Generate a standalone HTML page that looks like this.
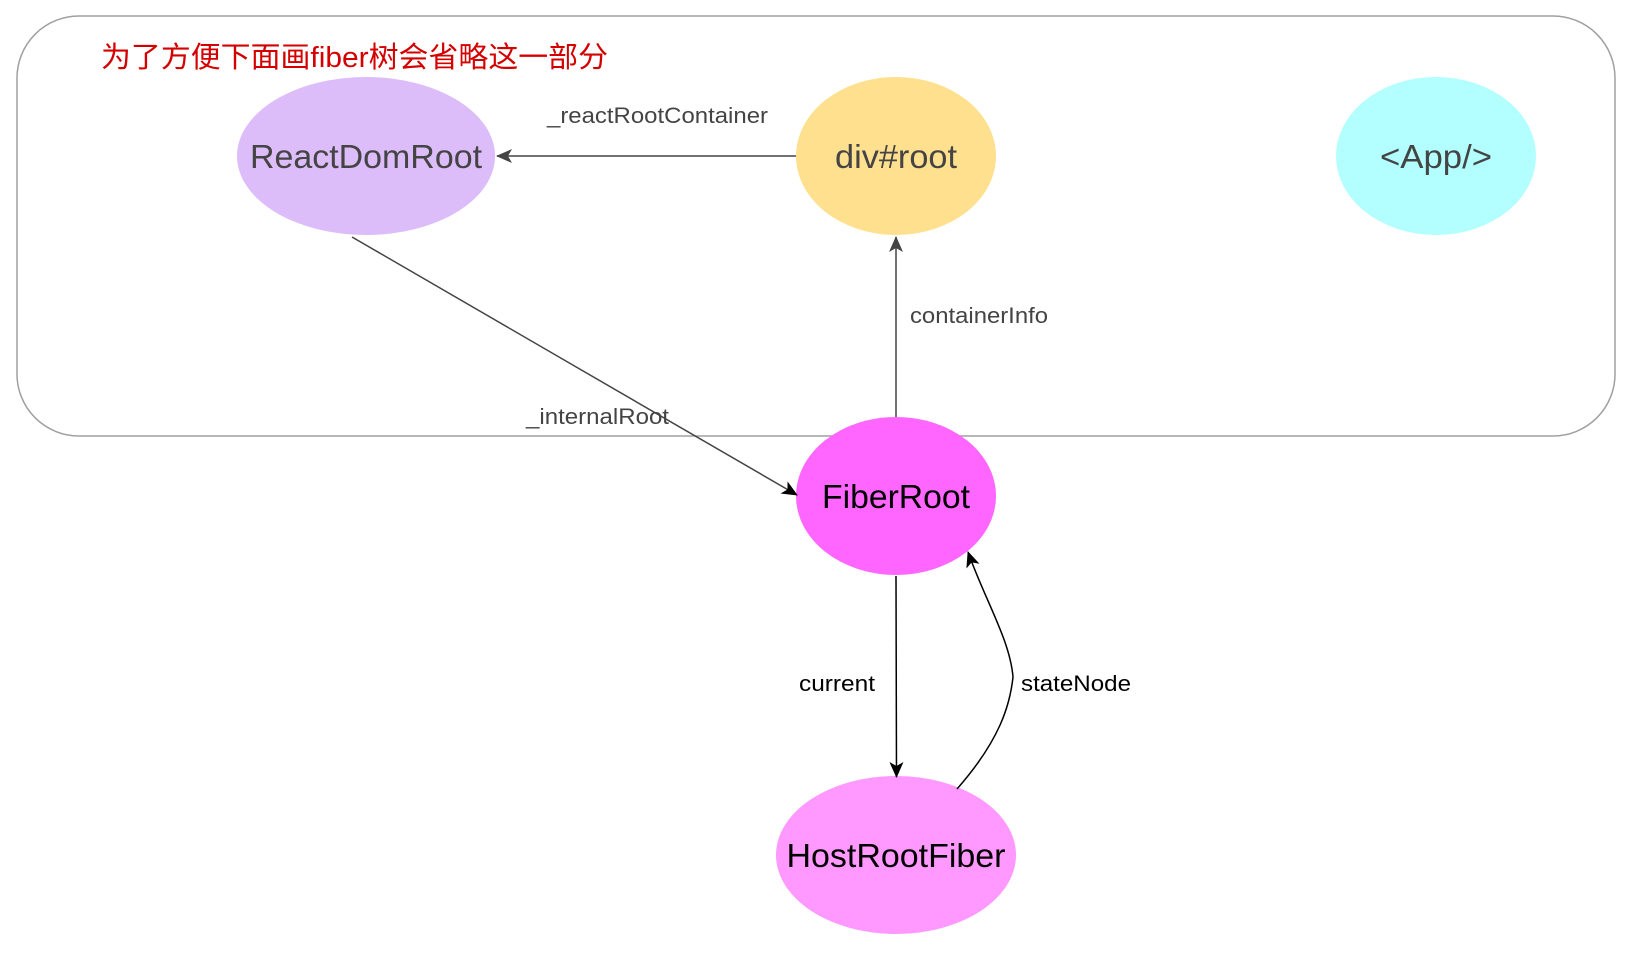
<!DOCTYPE html>
<html><head><meta charset="utf-8"><style>
html,body{margin:0;padding:0;background:#fff;}
svg{display:block;}
text{font-family:"Liberation Sans","Noto Sans CJK SC",sans-serif;}
</style></head><body>
<svg width="1634" height="954" viewBox="0 0 1634 954" xmlns="http://www.w3.org/2000/svg">
<defs>
<marker id="ag" markerWidth="16" markerHeight="14" refX="15" refY="7" orient="auto" markerUnits="userSpaceOnUse"><path d="M0,0 L16,7 L0,14 L4,7 Z" fill="#444"/></marker>
<marker id="ab" markerWidth="16" markerHeight="14" refX="15" refY="7" orient="auto" markerUnits="userSpaceOnUse"><path d="M0,0 L16,7 L0,14 L4,7 Z" fill="#000"/></marker>
</defs>
<rect x="17" y="16" width="1598" height="420" rx="62" ry="62" fill="none" stroke="#a0a0a0" stroke-width="1.5"/>
<text x="101" y="67" font-size="29" fill="#d40000" textLength="507" lengthAdjust="spacingAndGlyphs">为了方便下面画fiber树会省略这一部分</text>
<ellipse cx="366" cy="156" rx="129" ry="79" fill="#dcbcf9"/>
<text x="366" y="168" font-size="33" fill="#444" text-anchor="middle" textLength="232" lengthAdjust="spacingAndGlyphs">ReactDomRoot</text>
<ellipse cx="896" cy="156" rx="100" ry="79" fill="#ffe08f"/>
<text x="896" y="168" font-size="33" fill="#444" text-anchor="middle" textLength="122" lengthAdjust="spacingAndGlyphs">div#root</text>
<ellipse cx="1436" cy="156" rx="100" ry="79" fill="#b3ffff"/>
<text x="1436" y="168" font-size="33" fill="#444" text-anchor="middle" textLength="112" lengthAdjust="spacingAndGlyphs">&lt;App/&gt;</text>
<ellipse cx="896" cy="496" rx="100" ry="79" fill="#ff66ff"/>
<text x="896" y="508" font-size="33" fill="#000" text-anchor="middle" textLength="148" lengthAdjust="spacingAndGlyphs">FiberRoot</text>
<ellipse cx="896" cy="855" rx="120" ry="79" fill="#ff99ff"/>
<text x="896" y="867" font-size="33" fill="#000" text-anchor="middle" textLength="219" lengthAdjust="spacingAndGlyphs">HostRootFiber</text>
<line x1="796" y1="156" x2="497" y2="156" stroke="#444" stroke-width="1.5" marker-end="url(#ag)"/>
<text x="547" y="123" font-size="22" fill="#444" textLength="221" lengthAdjust="spacingAndGlyphs">_reactRootContainer</text>
<line x1="896" y1="417" x2="896" y2="237" stroke="#444" stroke-width="1.5" marker-end="url(#ag)"/>
<text x="910" y="323" font-size="22" fill="#444" textLength="138" lengthAdjust="spacingAndGlyphs">containerInfo</text>
<line x1="352" y1="237" x2="797" y2="495" stroke="#444" stroke-width="1.5" marker-end="url(#ab)"/>
<text x="526" y="424" font-size="22" fill="#444" textLength="143" lengthAdjust="spacingAndGlyphs">_internalRoot</text>
<line x1="896" y1="576" x2="896.5" y2="777" stroke="#000" stroke-width="1.5" marker-end="url(#ab)"/>
<text x="799" y="691" font-size="22" fill="#000" textLength="76" lengthAdjust="spacingAndGlyphs">current</text>
<path d="M957,789 C1000,740 1010,705 1013,677 C1010,640 985,600 968,552" fill="none" stroke="#000" stroke-width="1.5" marker-end="url(#ab)"/>
<text x="1021" y="691" font-size="22" fill="#000" textLength="110" lengthAdjust="spacingAndGlyphs">stateNode</text>
</svg>
</body></html>
